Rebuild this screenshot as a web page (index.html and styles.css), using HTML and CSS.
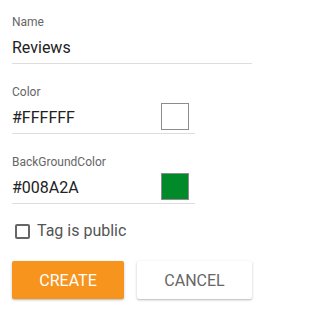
FILE: index.html
```html
<!DOCTYPE html>
<html>
<head>
<meta charset="utf-8">
<link rel="stylesheet" href="styles.css">
</head>
<body>
<form class="form">
  <div class="field">
    <label class="label">Name</label>
    <div class="row">
      <span class="value">Reviews</span>
    </div>
  </div>
  <div class="field narrow">
    <label class="label">Color</label>
    <div class="row">
      <span class="value">#FFFFFF</span>
      <span class="swatch swatch-white"></span>
    </div>
  </div>
  <div class="field narrow last">
    <label class="label">BackGroundColor</label>
    <div class="row">
      <span class="value">#008A2A</span>
      <span class="swatch swatch-green"></span>
    </div>
  </div>
  <div class="check">
    <span class="box"></span>
    <span class="check-text">Tag is public</span>
  </div>
  <div class="actions">
    <button type="button" class="btn btn-primary">CREATE</button>
    <button type="button" class="btn btn-secondary">CANCEL</button>
  </div>
</form>
</body>
</html>
```

FILE: styles.css
```css
html, body {
  margin: 0;
  padding: 0;
  background: #ffffff;
}
body {
  font-family: Roboto, "Liberation Sans", sans-serif;
  width: 264px;
  height: 312px;
  overflow: hidden;
}
.form {
  padding: 14px 12px 0 12px;
  display: flex;
  flex-direction: column;
}
.field {
  display: flex;
  flex-direction: column;
  width: 240px;
  margin-bottom: 20px;
}
.field.narrow {
  width: 183px;
}
.field.last {
  margin-bottom: 15px;
}
.label {
  font-size: 12px;
  line-height: 16px;
  color: #666666;
  margin-bottom: 3px;
}
.row {
  display: flex;
  align-items: flex-end;
  justify-content: space-between;
  min-height: 27px;
  padding-bottom: 3px;
  border-bottom: 1px solid #dddddd;
}
.value {
  font-size: 16px;
  line-height: 24px;
  color: #222222;
}
.swatch {
  width: 26px;
  height: 25px;
  border: 1px solid #8c8c8c;
  margin-right: 6px;
}
.swatch-white {
  background: #ffffff;
}
.swatch-green {
  background: #008a2a;
}
.check {
  display: flex;
  align-items: center;
  gap: 7px;
  padding-left: 3px;
  height: 24px;
}
.box {
  width: 11px;
  height: 11px;
  border: 2px solid #666666;
  border-radius: 2px;
}
.check-text {
  font-size: 16px;
  line-height: 24px;
  color: #555555;
}
.actions {
  display: flex;
  gap: 13px;
  margin-top: 18px;
}
.btn {
  height: 38px;
  border: none;
  border-radius: 2px;
  font-family: Roboto, "Liberation Sans", sans-serif;
  font-size: 16px;
  padding: 0;
  box-shadow: 0 1px 3px rgba(0,0,0,0.2), 0 1px 1px rgba(0,0,0,0.1);
}
.btn-primary {
  width: 112px;
  background: #f7941d;
  color: #ffffff;
}
.btn-secondary {
  width: 115px;
  background: #ffffff;
  color: #666666;
}
```
